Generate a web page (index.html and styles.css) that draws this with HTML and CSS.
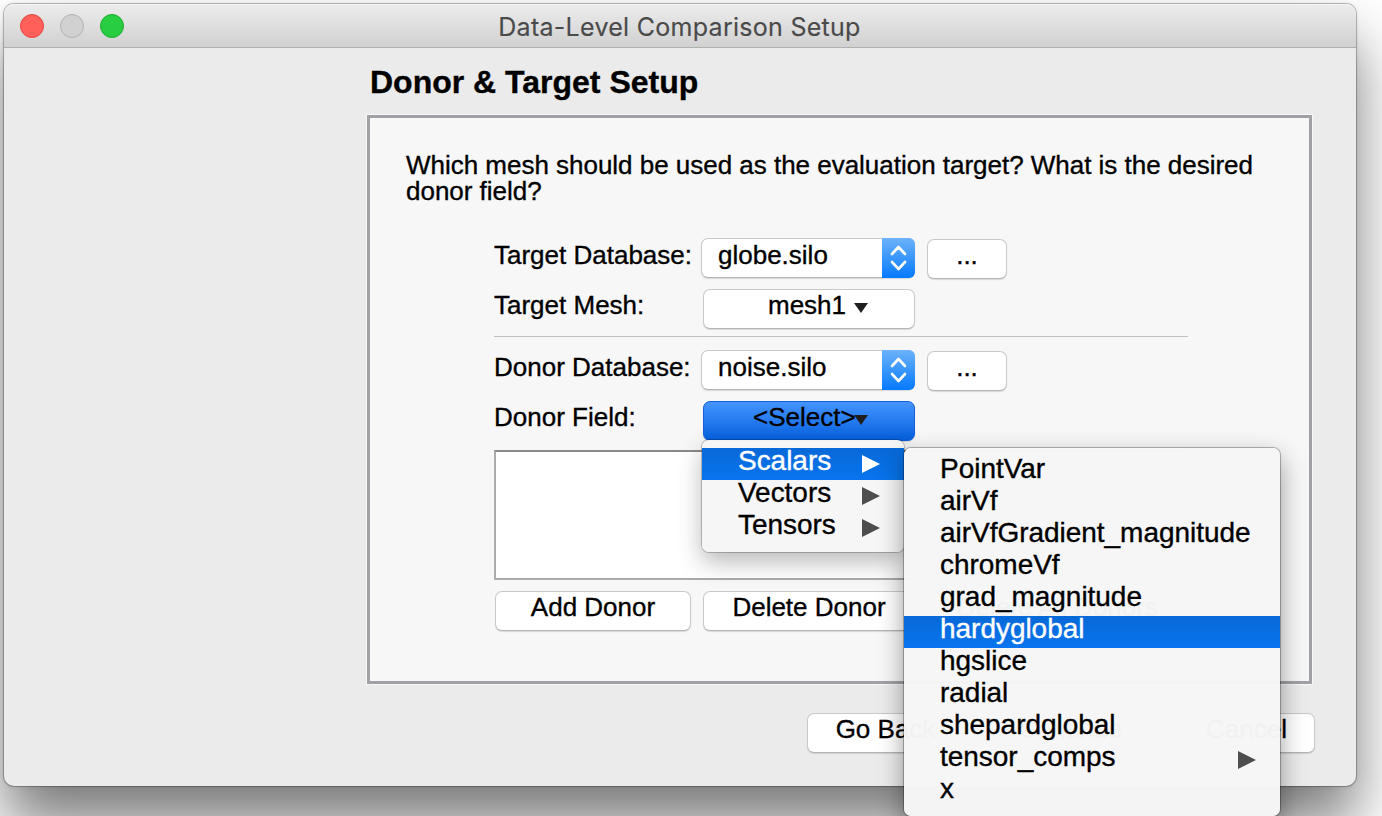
FILE: index.html
```html
<!DOCTYPE html>
<html lang="en">
<head>
<meta charset="utf-8">
<title>Data-Level Comparison Setup</title>
<link rel="stylesheet" href="styles.css">
</head>
<body>
<div class="window">
  <header class="titlebar">
    <div class="lights"><span class="light close"></span><span class="light minimize"></span><span class="light grow"></span></div>
    <span class="title">Data-Level Comparison Setup</span>
  </header>
  <main class="content">
    <h1>Donor &amp; Target Setup</h1>
    <section class="panel">
      <p class="question">Which mesh should be used as the evaluation target? What is the desired<br>donor field?</p>
      <div class="form">
        <div class="row">
          <label>Target Database:</label>
          <div class="combo"><span>globe.silo</span><div class="stepper"><svg viewBox="0 0 33 40"><path d="M10 16 16.500 9 23 16M10 24 16.500 31 23 24"/></svg></div></div>
          <button class="browse">...</button>
        </div>
        <div class="row mesh">
          <label>Target Mesh:</label>
          <button class="picker"><span class="mesh-text">mesh1</span><svg class="down" viewBox="0 0 14 11"><path d="M0 0H14L7 10Z"/></svg></button>
        </div>
        <div class="rule"></div>
        <div class="row">
          <label>Donor Database:</label>
          <div class="combo"><span>noise.silo</span><div class="stepper"><svg viewBox="0 0 33 40"><path d="M10 16 16.500 9 23 16M10 24 16.500 31 23 24"/></svg></div></div>
          <button class="browse">...</button>
        </div>
        <div class="row field">
          <label>Donor Field:</label>
          <button class="picker active"><span class="select-text">&lt;Select&gt;</span><svg class="down" viewBox="0 0 14 11"><path d="M0 0H14L7 10Z"/></svg></button>
        </div>
        <div class="list"></div>
        <div class="actions">
          <button class="add">Add Donor</button>
          <button class="delete">Delete Donor</button>
          <button class="delete-all">Delete All Donors</button>
        </div>
      </div>
    </section>
    <footer class="nav">
      <button class="back">Go Back</button>
      <button class="continue">Continue</button>
      <button class="cancel">Cancel</button>
    </footer>
  </main>
</div>
<ul class="menu types">
  <li class="selected">Scalars<svg class="right" viewBox="0 0 18 18"><path d="M0 0 18 9 0 18Z"/></svg></li>
  <li>Vectors<svg class="right" viewBox="0 0 18 18"><path d="M0 0 18 9 0 18Z"/></svg></li>
  <li>Tensors<svg class="right" viewBox="0 0 18 18"><path d="M0 0 18 9 0 18Z"/></svg></li>
</ul>
<ul class="menu variables">
  <li>PointVar</li>
  <li>airVf</li>
  <li>airVfGradient_magnitude</li>
  <li>chromeVf</li>
  <li>grad_magnitude</li>
  <li class="selected">hardyglobal</li>
  <li>hgslice</li>
  <li>radial</li>
  <li>shepardglobal</li>
  <li>tensor_comps<svg class="right" viewBox="0 0 18 18"><path d="M0 0 18 9 0 18Z"/></svg></li>
  <li>x</li>
</ul>
</body>
</html>
```
FILE: styles.css
```css
* { box-sizing: border-box; }
body {
  margin: 0;
  height: 816px;
  padding: 4px 0 0 4px;
  overflow: hidden;
  background: #fff;
  color: #000;
  font: 26px/26px "Liberation Sans", Arial, sans-serif;
  -webkit-text-stroke: .35px;
}
.window {
  width: 1352px;
  height: 782px;
  border-radius: 10px;
  background: #ebebeb;
  box-shadow: 0 0 0 1px rgba(0,0,0,.24), 0 0 5px rgba(0,0,0,.12), 0 38px 60px rgba(0,0,0,.52);
}
.titlebar {
  height: 44px;
  display: grid;
  grid-template-columns: 120px 1fr 120px;
  align-items: center;
  border-bottom: 1px solid #b0b0b0;
  border-radius: 10px 10px 0 0;
  background: linear-gradient(#ececec, #d1d1d1);
  box-shadow: inset 0 1px #f6f6f6;
}
.lights { display: flex; gap: 16px; padding-left: 16px; }
.light { width: 24px; height: 24px; border: 1px solid; border-radius: 50%; }
.close { background: #ff6059; border-color: #e2463f; }
.minimize { background: #d1d1d1; border-color: #b3b3b3; }
.grow { background: #29cd41; border-color: #1dad2b; }
.title {
  padding: 2px 1px 0 0;
  text-align: center;
  color: #4a4a4a;
  font: 25px/30px Inter, sans-serif;
  letter-spacing: .28px;
  -webkit-text-stroke: .15px;
}
.content { padding: 16px 42px 0 363px; }
h1 { margin: 0; padding-left: 3px; height: 51px; font-size: 32px; line-height: 36px; white-space: nowrap; }
.panel {
  width: 945px;
  height: 569px;
  border: 3px solid #a1a1a5;
  outline: 1px solid #f8f8f8;
  background: #f7f7f7;
  padding: 34px 0 0 36px;
}
.question { margin: 0; height: 86px; white-space: nowrap; letter-spacing: -.02px; }
.form { width: 694px; margin-left: 88px; }
.row { display: flex; height: 51px; }
label { width: 207px; padding-top: 4px; white-space: nowrap; }
.mesh label, .field label { padding-top: 3px; }
button, .combo {
  margin: 0;
  height: 40px;
  border: 1px solid #c9c9c9;
  border-bottom-color: #b4b4b4;
  border-radius: 7px;
  background: #fff;
  color: #000;
  font: inherit;
  box-shadow: 0 1px 1px rgba(0,0,0,.12);
  display: flex;
  align-items: flex-start;
  justify-content: center;
  white-space: nowrap;
}
button { padding: 2px 0 0; }
.combo { width: 214px; padding: 3px 0 0 16px; justify-content: space-between; }
.stepper { width: 33px; height: 40px; margin: -4px -1px 0 0; border-radius: 0 6px 6px 0; background: linear-gradient(#6cb3fa, #067aff); }
.stepper svg { display: block; width: 33px; height: 40px; fill: none; stroke: #fff; stroke-width: 2.6; stroke-linecap: round; stroke-linejoin: round; }
.browse { width: 80px; margin: 1px 0 0 12px; }
.mesh { height: 47px; }
.picker { width: 212px; margin-left: 2px; justify-content: flex-start; }
.mesh-text { margin-left: 64px; width: 86px; text-align: left; }
.select-text { margin-left: 49px; width: 101px; text-align: left; }
.down { width: 14px; height: 11px; margin-top: 11px; fill: #1e1e1e; flex: none; }
.active { border-color: #1460d8; background: linear-gradient(#4594ff, #0661df); }
.rule { height: 1px; margin-bottom: 13px; background: #bfbfbf; }
.field { height: 49px; }
.list { height: 130px; border: 2px solid #ababab; border-top-color: #898989; background: #fff; }
.actions { display: flex; gap: 12px; padding: 11px 0 0 1px; }
.add { width: 196px; }
.delete { width: 212px; }
.delete-all { width: 261px; }
.nav { display: flex; justify-content: flex-end; gap: 12px; padding-top: 29px; margin-right: -1px; }
.back { width: 156px; padding-left: 1px; }
.continue { width: 191px; }
.cancel { width: 137px; }
.menu {
  position: absolute;
  margin: 0;
  padding: 8px 0 0;
  list-style: none;
  border-radius: 7px;
  background: rgba(246,246,246,.98);
  font-size: 28px;
  line-height: 26px;
  letter-spacing: -.03px;
}
.menu li { height: 32px; display: flex; justify-content: space-between; padding: 0 24px 0 36px; }
.menu .selected { color: #fff; background: linear-gradient(#0869d8, #0874ee); }
.right { width: 18px; height: 18px; margin-top: 7px; fill: #4d4d4d; }
.selected .right { fill: #fff; }
.types { left: 702px; top: 440px; width: 202px; height: 112px; box-shadow: 0 0 0 1px rgba(0,0,0,.22), 0 10px 24px rgba(0,0,0,.28); }
.variables { left: 904px; top: 448px; width: 376px; height: 368px; box-shadow: 0 0 0 1px rgba(0,0,0,.28), 0 10px 26px rgba(0,0,0,.4); }
```
